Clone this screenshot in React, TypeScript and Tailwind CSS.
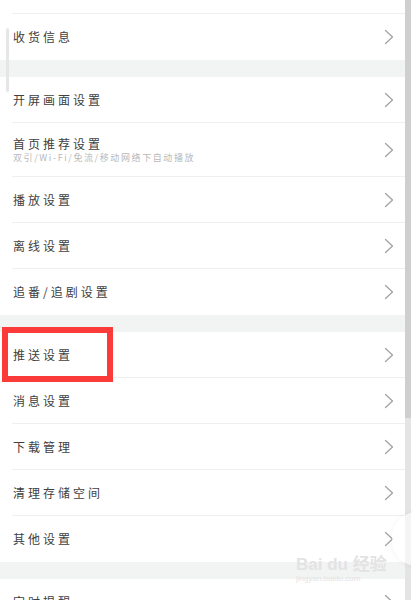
import React from "react";

type Item = { title: string; sub?: string };

const groups: Item[][] = [
  [{ title: "收货信息" }],
  [
    { title: "开屏画面设置" },
    { title: "首页推荐设置", sub: "双引/Wi-Fi/免流/移动网络下自动播放" },
    { title: "播放设置" },
    { title: "离线设置" },
    { title: "追番/追剧设置" },
  ],
  [
    { title: "推送设置" },
    { title: "消息设置" },
    { title: "下载管理" },
    { title: "清理存储空间" },
    { title: "其他设置" },
  ],
  [{ title: "定时提醒" }],
];

const font = { fontFamily: '"Noto Sans CJK SC", "Noto Sans", sans-serif' };

function Chevron() {
  return (
    <svg width="10" height="16" viewBox="0 0 10 16" fill="none">
      <path d="M1.5 1.5L8.5 8L1.5 14.5" stroke="#a3a3a3" strokeWidth="1.3" strokeLinecap="round" strokeLinejoin="round" />
    </svg>
  );
}

function Row({ item, last }: { item: Item; last: boolean }) {
  return (
    <div className={`ml-[12px] flex items-center justify-between pr-[11px] ${item.sub ? "h-[54px]" : "h-[46px]"} ${last ? "" : "border-b border-[#efefef]"}`}>
      <div className="flex flex-col pl-[1px]">
        <span className="text-[12px] leading-[16px] tracking-[3px] text-[#404040]">{item.title}</span>
        {item.sub && (
          <span className="text-[9px] leading-[12px] tracking-[1.6px] text-[#b8b8b8]">{item.sub}</span>
        )}
      </div>
      <Chevron />
    </div>
  );
}

export default function App() {
  return (
    <div className="relative w-[413px] h-[600px] overflow-hidden bg-white" style={font}>
      <div className="w-[405px] flex flex-col">
        <div className="ml-[12px] h-[14px] border-b border-[#efefef]" />
        {groups.map((g, gi) => (
          <div key={gi} className="flex flex-col">
            {gi > 0 && <div className="h-[17px] bg-[#f2f3f3]" />}
            {g.map((it, i) => (
              <Row key={it.title} item={it} last={i === g.length - 1} />
            ))}
          </div>
        ))}
      </div>

      {/* scrollbars */}
      <div className="absolute top-0 right-[2px] w-[6px] h-full bg-[#e4e4e4]">
        <div className="w-full h-[418px] bg-[#cfcfcf]" />
      </div>
      <div className="absolute left-[6px] top-[28px] w-[3px] h-[64px] rounded-full bg-[#e6e6e6]" />

      {/* highlight annotation */}
      <div className="absolute left-[2px] top-[327px] w-[111px] h-[55px] border-[6px] border-[#fb3a3a]" />

      {/* watermark */}
      <div className="absolute left-[392px] top-[512px] w-[50px] h-[54px] rounded-full bg-white/60 shadow-[0_0_6px_rgba(0,0,0,0.05)]" />
      <div className="absolute left-[296px] top-[556px] flex flex-col items-start leading-none text-[#e3e3e3]" style={{ fontFamily: '"Liberation Sans", "Noto Sans CJK SC", sans-serif' }}>
        <span className="text-[17px] font-bold">Bai du 经验</span>
        <span className="text-[8px] mt-[2px]">jingyan.baidu.com</span>
      </div>
    </div>
  );
}
